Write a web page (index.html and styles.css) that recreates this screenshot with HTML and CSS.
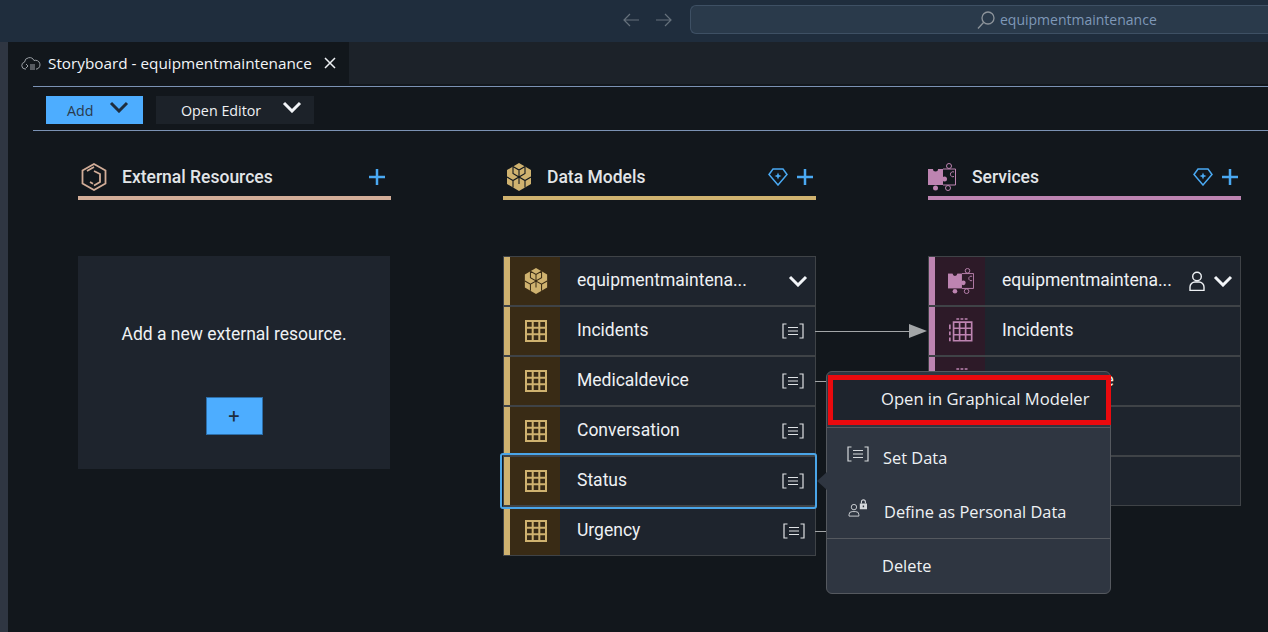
FILE: index.html
```html
<!DOCTYPE html>
<html lang="en">
  <head>
    <title>Storyboard - equipmentmaintenance</title>
    <link rel="stylesheet" href="styles.css">
  </head>
  <body>
    <svg class="defs" width="0" height="0">
      <symbol id="i-table" viewBox="0 0 22 22">
        <path d="M1 1h20v20H1zM1 7.7h20M1 14.3h20M7.7 1v20M14.3 1v20" fill="none" stroke="currentColor" stroke-width="2"/>
      </symbol>
      <symbol id="i-cubes" viewBox="0 0 26 28">
        <path d="M13 0l12 7v14l-12 7-12-7V7z" fill="currentColor"/>
        <path d="M7 3.500L13 7l6-3.500M13 7v7M7 3.500v7l6 3.500 6-3.500v-7M1 14l6 3.500 6-3.500 6 3.500 6-3.500M7 17.500v7M19 17.500v7M13 14v7" fill="none" stroke="var(--gap)" stroke-width="1.100"/>
      </symbol>
      <symbol id="i-puzzle" viewBox="0 0 28 28">
        <path d="M0 6h15v16H0z" fill="currentColor"/>
        <circle cx="7.500" cy="6" r="2.500" fill="var(--gap)"/>
        <circle cx="16.500" cy="16" r="2.500" fill="currentColor"/>
        <circle cx="7.500" cy="25" r="2.500" fill="currentColor"/>
        <path d="M15 6h12.500v16H15" fill="none" stroke="currentColor" stroke-width="1"/>
        <circle cx="21" cy="3" r="2.500" fill="none" stroke="currentColor"/>
        <circle cx="20" cy="25" r="2.500" fill="none" stroke="currentColor"/>
        <path d="M26 9a2.500 2.500 0 1 0 0 4.500" fill="none" stroke="currentColor"/>
      </symbol>
      <symbol id="i-entity" viewBox="0 0 26 28">
        <path d="M8 1h3M12.500 1h3M17 1h3" fill="none" stroke="currentColor" stroke-width="1.600"/>
        <path d="M5 4.500h19.500v20H5zM5 11h19.500M5 18h19.500M11.500 4.500v20M18 4.500v20M1 7v5M1 14.500v4M1 21v4" fill="none" stroke="currentColor" stroke-width="1.800"/>
      </symbol>
      <symbol id="i-setdata" viewBox="0 0 22 16">
        <path d="M4.500 1H1v14h3.500M17.500 1H21v14h-3.500" fill="none" stroke="currentColor" stroke-width="1.200"/>
        <path d="M6 4.500h10M6 8h10M6 11.500h10" fill="none" stroke="currentColor" stroke-width="1.100"/>
      </symbol>
      <symbol id="i-chev" viewBox="0 0 20 12">
        <path d="M2 2l8 8 8-8" fill="none" stroke="currentColor" stroke-width="3"/>
      </symbol>
      <symbol id="i-plus" viewBox="0 0 18 18">
        <path d="M9 1v16M1 9h16" fill="none" stroke="currentColor" stroke-width="2.500"/>
      </symbol>
      <symbol id="i-gem" viewBox="0 0 20 18">
        <path d="M5 1h10l4 5.500L10 17 1 6.500z" fill="none" stroke="currentColor" stroke-width="1.500"/>
        <path d="M10 4.500l1 2.500 2.500 1-2.500 1-1 2.500-1-2.500-2.500-1 2.500-1z" fill="currentColor"/>
      </symbol>
    </svg>

    <header class="titlebar">
      <svg class="nav-arrow" viewBox="0 0 16 14"><path d="M7 1L1 7l6 6M1 7h15" fill="none" stroke="currentColor" stroke-width="1.200"/></svg>
      <svg class="nav-arrow" viewBox="0 0 16 14"><path d="M9 1l6 6-6 6M15 7H0" fill="none" stroke="currentColor" stroke-width="1.200"/></svg>
      <div class="searchbox">
        <svg class="search-icon" viewBox="0 0 18 18"><circle cx="11" cy="7" r="6" fill="none" stroke="currentColor" stroke-width="1.300"/><path d="M6.500 11.500L1 17.500" fill="none" stroke="currentColor" stroke-width="1.300"/></svg>
        <span>equipmentmaintenance</span>
      </div>
    </header>

    <div class="shell">
      <div class="sidebar"></div>
      <main class="workspace">
        <div class="tabstrip">
          <div class="tab">
            <svg class="tab-icon" viewBox="0 0 20 14"><path d="M5 13H4a3.500 3.500 0 0 1-.5-6.900A5 5 0 0 1 13 4.500a4.200 4.200 0 0 1 3 8.500h-1" fill="none" stroke="currentColor"/><path d="M5 8l2 2-2 2M9 9h5M9 11h5M9 13h5" fill="none" stroke="currentColor"/></svg>
            <span>Storyboard - equipmentmaintenance</span>
            <svg class="tab-close" viewBox="0 0 12 12"><path d="M1 1l10 10M11 1L1 11" fill="none" stroke="currentColor" stroke-width="1.500"/></svg>
          </div>
        </div>

        <div class="toolbar">
          <button class="tool tool-add"><span>Add</span> <svg class="tool-chev"><use href="#i-chev"/></svg></button>
          <button class="tool tool-editor"><span>Open Editor</span> <svg class="tool-chev"><use href="#i-chev"/></svg></button>
        </div>

        <div class="board">
          <section class="column col-ext">
            <div class="col-head">
              <svg class="col-icon" viewBox="0 0 26 28"><path d="M13 1l11.500 6.500v13L13 27 1.500 20.500v-13z" fill="none" stroke="currentColor" stroke-width="1.800"/><path d="M6 8l7-4M13 8l6 3v8l-6 3.500M9 19l3 1.700" fill="none" stroke="currentColor" stroke-width="1.800"/></svg>
              <h2>External Resources</h2>
              <svg class="head-plus"><use href="#i-plus"/></svg>
            </div>
            <div class="empty-card">
              <p>Add a new external resource.</p>
              <button class="empty-add">+</button>
            </div>
          </section>

          <section class="column col-data">
            <div class="col-head">
              <svg class="col-icon"><use href="#i-cubes"/></svg>
              <h2>Data Models</h2>
              <svg class="head-gem"><use href="#i-gem"/></svg>
              <svg class="head-plus"><use href="#i-plus"/></svg>
            </div>
            <div class="list">
              <div class="row">
                <div class="row-icon"><svg class="icon-cube"><use href="#i-cubes"/></svg></div>
                <span class="row-name">equipmentmaintena...</span>
                <svg class="row-chev"><use href="#i-chev"/></svg>
              </div>
              <div class="row">
                <div class="row-icon"><svg class="icon-table"><use href="#i-table"/></svg></div>
                <span class="row-name">Incidents</span>
                <svg class="row-set"><use href="#i-setdata"/></svg>
                <div class="link link-long"></div>
              </div>
              <div class="row">
                <div class="row-icon"><svg class="icon-table"><use href="#i-table"/></svg></div>
                <span class="row-name">Medicaldevice</span>
                <svg class="row-set"><use href="#i-setdata"/></svg>
                <div class="link"></div>
              </div>
              <div class="row">
                <div class="row-icon"><svg class="icon-table"><use href="#i-table"/></svg></div>
                <span class="row-name">Conversation</span>
                <svg class="row-set"><use href="#i-setdata"/></svg>
              </div>
              <div class="row row-selected">
                <div class="row-icon"><svg class="icon-table"><use href="#i-table"/></svg></div>
                <span class="row-name">Status</span>
                <svg class="row-set"><use href="#i-setdata"/></svg>
              </div>
              <div class="row">
                <div class="row-icon"><svg class="icon-table"><use href="#i-table"/></svg></div>
                <span class="row-name">Urgency</span>
                <svg class="row-set"><use href="#i-setdata"/></svg>
                <div class="link"></div>
              </div>
            </div>
          </section>

          <section class="column col-svc">
            <div class="col-head">
              <svg class="col-icon"><use href="#i-puzzle"/></svg>
              <h2>Services</h2>
              <svg class="head-gem"><use href="#i-gem"/></svg>
              <svg class="head-plus"><use href="#i-plus"/></svg>
            </div>
            <div class="list">
              <div class="row">
                <div class="row-icon"><svg class="icon-cube"><use href="#i-puzzle"/></svg></div>
                <span class="row-name">equipmentmaintena...</span>
                <svg class="row-user" viewBox="0 0 16 20"><circle cx="8" cy="5.500" r="4.300" fill="none" stroke="currentColor" stroke-width="1.400"/><path d="M1 19.500v-3.500a5 5 0 0 1 5-5h4a5 5 0 0 1 5 5v3.500z" fill="none" stroke="currentColor" stroke-width="1.400"/></svg>
                <svg class="row-chev row-chev-svc"><use href="#i-chev"/></svg>
              </div>
              <div class="row">
                <div class="row-icon"><svg class="icon-cube"><use href="#i-entity"/></svg></div>
                <span class="row-name">Incidents</span>
              </div>
              <div class="row">
                <div class="row-icon"><svg class="icon-cube"><use href="#i-entity"/></svg></div>
                <span class="row-name">Medicaldevice</span>
              </div>
              <div class="row">
                <div class="row-icon"><svg class="icon-cube"><use href="#i-entity"/></svg></div>
                <span class="row-name">Conversation</span>
              </div>
              <div class="row">
                <div class="row-icon"><svg class="icon-cube"><use href="#i-entity"/></svg></div>
                <span class="row-name">Status</span>
              </div>
            </div>
          </section>

          <div class="menu">
            <div class="menu-arrow"></div>
            <div class="menu-item menu-open">
              <span>Open in Graphical Modeler</span>
            </div>
            <div class="menu-group">
              <div class="menu-item menu-set">
                <svg class="menu-icon"><use href="#i-setdata"/></svg>
                <span>Set Data</span>
              </div>
              <div class="menu-item menu-personal">
                <svg class="menu-icon" viewBox="0 0 22 20"><circle cx="6.500" cy="9" r="3" fill="none" stroke="currentColor"/><path d="M1 19v-1.500a3.500 3.500 0 0 1 3.500-3.500h4a3.500 3.500 0 0 1 3.500 3.500V19z" fill="none" stroke="currentColor"/><path d="M14.800 5V3.200a2.200 2.200 0 0 1 4.400 0V5" fill="none" stroke="currentColor" stroke-width="1.200"/><path d="M13 5h8v6.500h-8zM16.200 7.200v2h1.600v-2z" fill="currentColor" fill-rule="evenodd"/></svg>
                <span>Define as Personal Data</span>
              </div>
            </div>
            <div class="menu-item menu-delete">
              <span>Delete</span>
            </div>
          </div>
        </div>
      </main>
    </div>
  </body>
</html>
```
FILE: styles.css
```css
*,
*:before,
*:after {
  box-sizing: border-box;
}

html,
body {
  height: 100%;
}

body {
  margin: 0;
  font-family: Roboto, sans-serif;
  background-color: #12171c;
  color: #e8ecf0;
  overflow: hidden;
}

.defs {
  position: absolute;
}

/* title bar */
.titlebar {
  height: 42px;
  background-color: #1f2d3d;
  display: flex;
  align-items: flex-start;
  padding: 5px 0 0 623px;
}

.nav-arrow {
  flex: none;
  width: 16px;
  height: 14px;
  margin: 8px 17px 0 0;
  color: #66717c;
}

.nav-arrow + .nav-arrow {
  margin-right: 18px;
}

.searchbox {
  flex: 1;
  height: 29px;
  background-color: #2a3a4b;
  border: 1px solid #3e5064;
  border-right: none;
  border-radius: 6px 0 0 6px;
  display: flex;
  align-items: center;
  gap: 5px;
  padding-left: 286px;
  color: #7f98b8;
  font-family: "Open Sans", sans-serif;
  font-size: 14px;
}

.search-icon {
  width: 18px;
  height: 18px;
  color: #8d949b;
}

/* shell */
.shell {
  display: flex;
  height: 590px;
}

.sidebar {
  width: 8px;
  background-color: #2f3642;
}

.workspace {
  flex: 1;
  min-width: 0;
}

.tabstrip {
  height: 42px;
  background-color: #1c2229;
}

.tab {
  width: 341px;
  height: 42px;
  background-color: #12171c;
  display: flex;
  align-items: center;
  padding-left: 13px;
  font-family: "Open Sans", sans-serif;
  font-size: 15.300px;
  color: #f2f5f8;
}

.tab-icon {
  width: 20px;
  height: 14px;
  margin-right: 7px;
  color: #9a9fa5;
}

.tab-close {
  width: 12px;
  height: 12px;
  margin-left: 12px;
  color: #eef1f4;
}

.toolbar {
  margin: 2px 0 0 25px;
  height: 45px;
  border-top: 1px solid #7b92b4;
  border-bottom: 1px solid #7b92b4;
  display: flex;
  align-items: center;
  gap: 13px;
  padding: 2px 0 0 13px;
}

.tool {
  height: 28px;
  border: none;
  padding: 0;
  font-family: "Open Sans", sans-serif;
  font-size: 14.300px;
  display: flex;
  align-items: center;
}

.tool span {
  padding-top: 2px;
}

.tool-add {
  width: 97px;
  background-color: #4dadff;
  color: #2a3a4c;
  padding-left: 21px;
}

.tool-editor {
  width: 158px;
  background-color: #1c2229;
  color: #eef1f4;
  padding-left: 25px;
}

.tool-chev {
  width: 20px;
  height: 12px;
  margin: -5px 12px 0 auto;
}

.tool-add .tool-chev {
  color: #1f2d3d;
  margin-right: 14px;
}

.tool-editor .tool-chev {
  color: #f2f5f8;
}

/* board */
.board {
  position: relative;
  display: grid;
  grid-template-columns: repeat(3, 313px);
  column-gap: 112px;
  padding: 29px 0 0 70px;
}

.column {
  --accent: #cfb26f;
  --accent-dark: #392b15;
}

.col-ext {
  --accent: #d2ad98;
}

.col-svc {
  --accent: #bd84b1;
  --accent-dark: #2d1a28;
}

.col-head {
  --gap: #12171c;
  height: 40px;
  display: flex;
  align-items: center;
  padding: 0 2px 2px 3px;
  border-bottom: 4px solid var(--accent);
}

.col-ext .col-head {
  padding-right: 5px;
}

.col-icon {
  width: 26px;
  height: 28px;
  margin-right: 15px;
  color: var(--accent);
}

.col-svc .col-icon {
  width: 28px;
  margin: 0 16px 0 -3px;
}

.col-head h2 {
  flex: 1;
  margin: 0;
  font-size: 17.500px;
  font-weight: 500;
  color: #e2e5e8;
}

.head-plus {
  width: 18px;
  height: 18px;
  color: #4aa9f2;
}

.head-gem {
  width: 20px;
  height: 18px;
  margin-right: 8px;
  color: #4aa9f2;
}

.empty-card {
  margin-top: 56px;
  width: 312px;
  height: 213px;
  background-color: #1e242d;
  display: flex;
  flex-direction: column;
  align-items: center;
  padding-top: 66px;
}

.empty-card p {
  margin: 0 0 51px;
  font-size: 17.500px;
  line-height: 24px;
  color: #eef1f4;
}

.empty-add {
  width: 57px;
  height: 38px;
  background-color: #4dadff;
  border: 1px solid #2d6ea8;
  color: #1f2d3d;
  font-size: 20px;
  font-family: Roboto, sans-serif;
  padding: 0;
}

/* lists */
.list {
  margin-top: 56px;
  display: grid;
  gap: 2px;
  background-color: #3f4347;
  border: 1px solid #3f4347;
}

.row {
  position: relative;
  height: 48px;
  background-color: #1e242d;
  border-left: 6px solid var(--accent);
  display: flex;
  align-items: center;
  font-size: 17.500px;
  color: #eef1f4;
}

.row-icon {
  --gap: var(--accent-dark);
  width: 50px;
  height: 100%;
  background-color: var(--accent-dark);
  display: flex;
  align-items: center;
  justify-content: center;
  padding-left: 2px;
  color: var(--accent);
  margin-right: 17px;
}

.row-name {
  flex: 1;
  padding-bottom: 2px;
}

.icon-table {
  width: 22px;
  height: 22px;
}

.icon-cube {
  width: 26px;
  height: 26px;
}

.row-set {
  width: 22px;
  height: 16px;
  margin-right: 11px;
  color: #dfe2e5;
}

.row:last-child .row-set {
  margin-right: 10px;
}

.row-chev {
  width: 20px;
  height: 12px;
  margin-right: 7px;
  color: #f2f5f8;
}

.row-chev-svc {
  margin-left: 8px;
}

.row-user {
  width: 16px;
  height: 20px;
  color: #eef1f4;
}

.row-selected {
  z-index: 1;
}

.row-selected:after {
  content: "";
  position: absolute;
  top: -4px;
  bottom: -4px;
  left: -10px;
  right: -2px;
  border: 2px solid #4aa5e8;
  border-radius: 3px;
}

/* connector lines between the columns */
.link {
  position: absolute;
  left: 100%;
  top: 24px;
  width: 13px;
  height: 1px;
  background-color: #a3a6a8;
}

.link-long {
  width: 96px;
}

.link-long:after {
  content: "";
  position: absolute;
  left: 94px;
  top: -7px;
  border-left: 18px solid #a3a6a8;
  border-top: 7px solid transparent;
  border-bottom: 7px solid transparent;
}

/* context menu over the board */
.menu {
  position: absolute;
  left: 818px;
  top: 240px;
  width: 285px;
  height: 223px;
  z-index: 2;
  background-color: #2f3641;
  border: 1px solid #55595f;
  border-radius: 6px;
  font-family: "Open Sans", sans-serif;
  font-size: 16.400px;
  color: #eef1f4;
  display: flex;
  flex-direction: column;
}

.menu-arrow {
  position: absolute;
  left: -10px;
  top: 100px;
  border-right: 10px solid #2f3641;
  border-top: 9px solid transparent;
  border-bottom: 9px solid transparent;
}

.menu-item {
  display: flex;
  align-items: center;
  padding-left: 55px;
}

.menu-open {
  height: 50px;
  margin: 3px -1px 0 1px;
  background-color: #1e242d;
  border: 5px solid #ea0a0e;
  padding: 0 0 4px 48px;
  font-size: 16.600px;
}

.menu-group {
  margin-top: 2px;
  border-top: 1px solid #55595f;
  border-bottom: 1px solid #55595f;
  height: 112px;
  display: flex;
  flex-direction: column;
}

.menu-set {
  height: 58px;
}

.menu-personal {
  height: 52px;
  padding-bottom: 2px;
}

.menu-personal span {
  margin-left: 1px;
}

.menu-delete {
  flex: 1;
  padding-bottom: 2px;
}

.menu-icon {
  width: 22px;
  height: 18px;
  margin: -6px 14px 0 -35px;
  color: #d6d9dc;
}
```
